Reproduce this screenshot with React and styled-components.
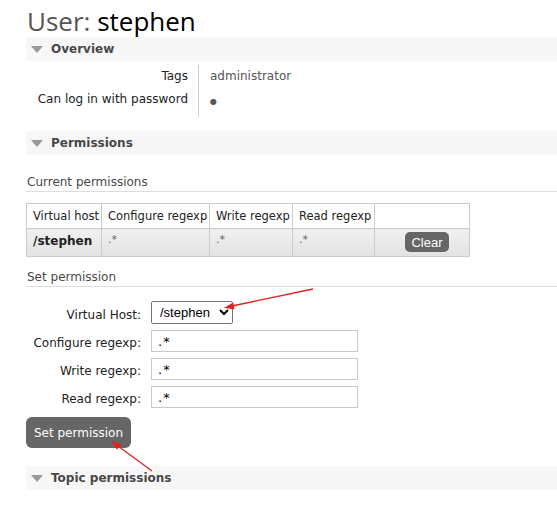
import styled, { createGlobalStyle } from "styled-components"

const GlobalStyle = createGlobalStyle`
    body{
        margin: 0;
        font-family: "DejaVu Sans", Verdana, sans-serif;
        font-size: 12px;
        color: #484848;
        background: #fff;
        overflow: hidden;
    }
`

const columns = [
    {title: "Virtual host", width: 75},
    {title: "Configure regexp", width: 108},
    {title: "Write regexp", width: 83},
    {title: "Read regexp", width: 82},
    {title: "", width: 95},
]

const fields = ["Configure regexp:", "Write regexp:", "Read regexp:"]

function Section({title, children, $gap}){
    return(
        <SectionBox $gap={$gap}>
            <SectionHeader>{title}</SectionHeader>
            {children}
        </SectionBox>
    )
}

export default function App(){
    return(
        <Page>
            <GlobalStyle/>
            <Title><span>User:</span> stephen</Title>

            <Section title="Overview" $gap={14}>
                <Facts>
                    <FactLabel>Tags</FactLabel>
                    <FactValue>administrator</FactValue>
                    <FactLabel $last>Can log in with password</FactLabel>
                    <FactValue $last><Dot>&#9679;</Dot></FactValue>
                </Facts>
            </Section>

            <Section title="Permissions" $gap={18}>
                <SubHeading $top={20}>Current permissions</SubHeading>
                <PermTable>
                    <colgroup>
                        {columns.map((col, index) => (
                            <col key={index} style={{width: col.width}}/>
                        ))}
                    </colgroup>
                    <thead>
                        <tr>
                            {columns.map((col, index) => (
                                <th key={index}>{col.title}</th>
                            ))}
                        </tr>
                    </thead>
                    <tbody>
                        <tr>
                            <td><b>/stephen</b></td>
                            <td><Regexp>.*</Regexp></td>
                            <td><Regexp>.*</Regexp></td>
                            <td><Regexp>.*</Regexp></td>
                            <td><SmallButton>Clear</SmallButton></td>
                        </tr>
                    </tbody>
                </PermTable>

                <SubHeading $top={13}>Set permission</SubHeading>
                <Form>
                    <FormLabel>Virtual Host:</FormLabel>
                    <div>
                        <Select defaultValue="/stephen">
                            <option>/stephen</option>
                        </Select>
                    </div>
                    {fields.map((field) => (
                        <Row key={field}>
                            <FormLabel>{field}</FormLabel>
                            <div><TextInput defaultValue=".*"/></div>
                        </Row>
                    ))}
                </Form>
                <BigButton>Set permission</BigButton>
            </Section>

            <Section title="Topic permissions">
                <SubHeading $top={22}>Current topic permissions</SubHeading>
            </Section>

            <Annotations width="557" height="512" viewBox="0 0 557 512">
                <line x1="313" y1="289" x2="232" y2="306" stroke="#e8201c" strokeWidth="1.3"/>
                <polygon points="224,308 234.5,309.3 233.1,302.5" fill="#e8201c"/>
                <line x1="152" y1="471" x2="118" y2="446" stroke="#e8201c" strokeWidth="1.3"/>
                <polygon points="111,441 121.1,444.1 117,449.7" fill="#e8201c"/>
            </Annotations>
        </Page>
    )
}

const Page = styled.div`
    position: relative;
    width: 557px;
    height: 512px;
    padding-left: 26px;
    box-sizing: border-box;
    overflow: hidden;
`

const Title = styled.h1`
    margin: 0;
    padding: 5px 0 0 1px;
    height: 37px;
    box-sizing: border-box;
    font-family: "Open Sans", "DejaVu Sans", sans-serif;
    font-weight: normal;
    font-size: 26px;
    line-height: 32px;
    color: #000;

    span{
        color: #555;
    }
`

const SectionBox = styled.div`
    margin-bottom: ${props => props.$gap ?? 0}px;
`

const SectionHeader = styled.h2`
    position: relative;
    margin: 0;
    height: 24px;
    line-height: 24px;
    padding-left: 25px;
    background: #f7f7f7;
    font-size: 12px;
    font-weight: bold;
    color: #484848;

    &::before{
        content: "";
        position: absolute;
        left: 5px;
        top: 9px;
        border-left: 6px solid transparent;
        border-right: 6px solid transparent;
        border-top: 7px solid #9a9a9a;
    }
`

const Facts = styled.div`
    display: grid;
    grid-template-columns: 172px auto;
    margin-top: 4px;
`

const FactLabel = styled.div`
    text-align: right;
    padding-right: 10px;
    line-height: 23px;
    color: #222;
    padding-bottom: ${props => props.$last ? "5px" : "0"};
`

const FactValue = styled.div`
    border-left: 1px solid #ccc;
    padding-left: 11px;
    line-height: 23px;
    color: #555;
    padding-bottom: ${props => props.$last ? "5px" : "0"};
`

const Dot = styled.span`
    font-size: 8px;
    position: relative;
    top: 1px;
`

const SubHeading = styled.h3`
    margin: ${props => props.$top ?? 19}px 0 0;
    font-size: 12px;
    font-weight: normal;
    line-height: 14px;
    color: #484848;
    padding: 0 0 2px 1px;
    border-bottom: 1px solid #ddd;
`

const PermTable = styled.table`
    margin-top: 11px;
    width: 443px;
    border-collapse: collapse;
    table-layout: fixed;
    font-size: 11.5px;

    th{
        border: 1px solid #ccc;
        height: 24px;
        padding: 0 6px;
        text-align: left;
        font-weight: normal;
        color: #222;
        white-space: nowrap;
        line-height: 14px;
    }

    td{
        border: 1px solid #ccc;
        height: 28px;
        padding: 2px 6px 0;
        vertical-align: top;
        background: linear-gradient(#f1f1f1, #e2e2e2);
        color: #222;
        line-height: 16px;
        box-sizing: border-box;
    }

    b{
        display: inline-block;
        margin-top: 2px;
        font-size: 12px;
    }
`

const Regexp = styled.span`
    font-size: 11px;
    color: #666;
`

const SmallButton = styled.button`
    display: block;
    margin: 1px 0 0 24px;
    height: 20px;
    width: 44px;
    padding: 0;
    border: 0;
    border-radius: 5px;
    background: #666;
    color: #fff;
    font-family: "Liberation Sans", Arial, sans-serif;
    font-size: 13px;
`

const Form = styled.div`
    display: grid;
    grid-template-columns: 115px auto;
    column-gap: 10px;
    row-gap: 6px;
    margin-top: 14px;
`

const Row = styled.div`
    display: contents;
`

const FormLabel = styled.div`
    text-align: right;
    align-self: center;
    padding-top: 4px;
    color: #222;
    font-size: 12px;
`

const Select = styled.select`
    display: block;
    width: 82px;
    height: 23px;
    padding: 0 0 0 4px;
    border: 1px solid #767676;
    border-radius: 2px;
    background: #fff;
    color: #000;
    font-family: "Liberation Sans", Arial, sans-serif;
    font-size: 13px;
`

const TextInput = styled.input`
    display: block;
    width: 207px;
    height: 22px;
    box-sizing: border-box;
    border: 1px solid #c8c8c8;
    padding: 0 6px;
    font-family: "DejaVu Sans", Verdana, sans-serif;
    font-size: 13px;
    color: #000;
    letter-spacing: 1px;
`

const BigButton = styled.button`
    display: block;
    margin-top: 9px;
    height: 31px;
    width: 105px;
    padding: 0;
    border: 0;
    border-radius: 6px;
    background: #666;
    color: #fff;
    font-family: "DejaVu Sans", Verdana, sans-serif;
    font-size: 12px;
`

const Annotations = styled.svg`
    position: absolute;
    left: 0;
    top: 0;
    pointer-events: none;
`
